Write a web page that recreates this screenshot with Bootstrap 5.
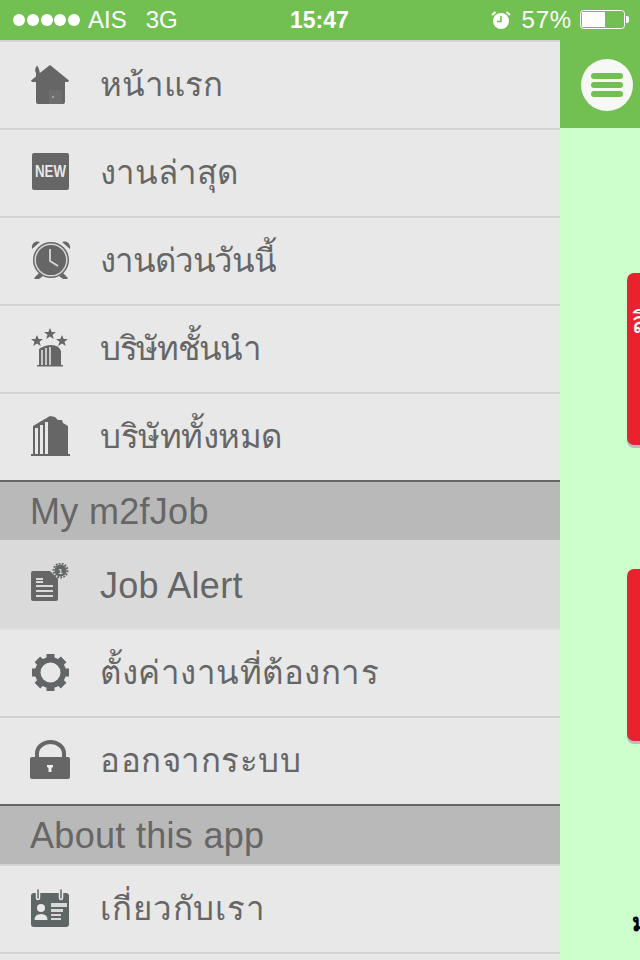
<!DOCTYPE html>
<html lang="th"><head><meta charset="utf-8"><title>m2fJob</title>
<link href="https://cdn.jsdelivr.net/npm/bootstrap@5.3.0/dist/css/bootstrap.min.css" rel="stylesheet">
<style>
html,body{width:640px;height:960px;overflow:hidden;margin:0}
body{font-family:"Liberation Sans","Noto Sans","DejaVu Sans",sans-serif;background:#ccffcc}
.sbar{height:40px;background:#72bf52;color:#fff;font-size:24px;line-height:40px;padding:0 0 0 13px;position:relative}
.sdots{display:flex;gap:1.75px;margin-right:8px}
.sdots i{width:12px;height:12px;border-radius:50%;background:#fff;display:block}
.scarrier{margin-left:19px}
.stime{position:absolute;left:290px;top:0;font-weight:700;font-size:23px}
.sright{position:absolute;right:0;top:0;height:40px}
.sclock{margin-right:11px}
.spct{margin-right:8px;letter-spacing:.8px}
.sbatt{margin-right:11px}
.shell{height:920px}
.side{width:560px;flex:none;background:#e8e8e8}
.mrow{height:88px;border-bottom:2px solid #d3d3d3;color:#666;font-size:33px;padding-left:30px;overflow:hidden}
.mrow.first{border-top:2px solid #d3d3d3;height:90px}
.mrow.sel{background:#dadada;height:90px;border-bottom-color:#e0e0e0;font-size:36px;letter-spacing:.3px}
.mrow.sel span{padding-top:3px}
.mrow.nosep{border-bottom:0;height:86px}
.mrow svg{width:42px;height:42px;flex:none;margin-right:28px}
.sp-a{letter-spacing:-1.1px}
.sp-b{letter-spacing:-1.3px}
.sp-c{letter-spacing:-.45px}
.sp-d{letter-spacing:.5px}
.sp-e{letter-spacing:.9px}
.mhead{height:60px;background:#b9b9b9;border-top:2px solid #666;color:#666;font-size:36px;letter-spacing:.3px;padding-left:30px;line-height:60px}
.mhead.abt{height:62px;border-bottom:2px solid #d3d3d3}
.rcol{flex:1;overflow:hidden;min-width:0}
.rtop{height:88px;background:#72bf52;padding:19px 0 0 21px}
.burger{width:52px;height:52px;border-radius:50%;background:#f6f8f6;padding:14px 10px 0;display:flex;flex-direction:column;gap:3px}
.burger i{display:block;height:6px;border-radius:3px;background:#72bf52}
.rbody{padding:145px 0 0 67px;height:832px;overflow:hidden}
.rcard{width:300px;height:172px;background:#e8232f;border-radius:7px;box-shadow:0 3px 0 #bdbdbd;color:#fff;font-size:30px;padding:32px 0 0 4px;line-height:36px;margin-bottom:124px;white-space:nowrap}
.rfoot{color:#000;font-size:24px;font-weight:700;white-space:nowrap;line-height:30px;margin-left:5px;margin-top:167px}
.rcard + .rcard{margin-bottom:0}
</style></head><body>
<div class="sbar d-flex align-items-center">
 <div class="sdots"><i></i><i></i><i></i><i></i><i></i></div><span>AIS</span><span class="scarrier">3G</span>
 <span class="stime">15:47</span>
 <div class="sright d-flex align-items-center">
  <svg class="sclock" width="20" height="20" viewBox="0 0 20 20"><circle cx="10" cy="11" r="8" fill="#fff"/><path d="M10 6v5.500H6" stroke="#72bf52" stroke-width="1.600" fill="none"/><path d="M1 5 4.500 2M19 5 15.500 2" stroke="#fff" stroke-width="2"/></svg>
  <span class="spct">57%</span>
  <svg class="sbatt" width="49" height="20" viewBox="0 0 49 20"><rect x=".5" y=".5" width="44" height="18" rx="3" fill="none" stroke="#fff"/><rect x="2" y="2" width="23" height="15" fill="#fff"/><path d="M46 6h1q2 0 2 2v3q0 2-2 2h-1z" fill="#fff"/></svg>
 </div>
</div>
<div class="shell d-flex">
<div class="side">
 <div class="mrow first d-flex align-items-center"><svg viewBox="0 0 42 42"><path d="M20 1 39 16.500l-1 1.500h-3v20a2 2 0 0 1-2 2H8a2 2 0 0 1-2-2V18H2l-1-1.500 5-4V9C4.500 7 5 4 7 1.500c1.500 2 2.500 4 2.800 7.500z" fill="#666"/><path d="M19 26h13v14H19z" fill="#6e6e6e"/><circle cx="23" cy="33" r=".8" fill="#ddd"/></svg><span>หน้าแรก</span></div>
 <div class="mrow d-flex align-items-center"><svg viewBox="0 0 42 42"><rect x="2" y="1" width="37" height="37" rx="2" fill="#666"/><text x="20.500" y="25" text-anchor="middle" textLength="31" lengthAdjust="spacingAndGlyphs" font-family="Liberation Sans" font-weight="700" font-size="16" fill="#e8e8e8">NEW</text></svg><span>งานล่าสุด</span></div>
 <div class="mrow d-flex align-items-center"><svg viewBox="0 0 42 42"><path d="M2 9C1 3 6 0 10 2zM40 9c1-6-4-9-8-7zM9 33l-5 5 1 1h4l4-3zM33 33l5 5-1 1h-4l-4-3z" fill="#666"/><circle cx="21" cy="20" r="18" fill="#666"/><circle cx="21" cy="20" r="15.800" fill="none" stroke="#d8d8d8" stroke-width="1.500"/><path d="M20 9v12l8 5" fill="none" stroke="#d8d8d8" stroke-width="1.800"/></svg><span class="sp-a">งานด่วนวันนี้</span></div>
 <div class="mrow d-flex align-items-center"><svg viewBox="0 0 42 42"><path d="M20 0l1.700 4h4.300l-3.500 2.800 1.300 4.300L20 8.500l-3.800 2.600 1.300-4.300L14 4h4.300zM7 7l1.700 4H13l-3.500 2.800 1.300 4.300L7 15.500l-3.800 2.600 1.300-4.300L1 11h4.300zM32 7l1.700 4H38l-3.500 2.800 1.300 4.300L32 15.500l-3.800 2.600 1.300-4.300L26 11h4.300z" fill="#666"/><path d="M9 38V21q6-4 12-4 8 0 10 6v15z" fill="#666"/><path d="M12 22v16M16 20v18M20 19v19" stroke="#e8e8e8" stroke-width="1.500"/><rect x="7" y="37" width="26" height="1.500" fill="#666"/></svg><span class="sp-b">บริษัทชั้นนำ</span></div>
 <div class="mrow nosep d-flex align-items-center"><svg viewBox="0 0 42 42"><path d="M3 39V10L20 0l5 1 3 3h4l1 3 5 3v29z" fill="#666"/><path d="M6.500 39V12M11.500 39V9M16.500 39V6" stroke="#e8e8e8" stroke-width="3"/><rect x="1" y="38" width="39" height="2" fill="#666"/></svg><span class="sp-c">บริษัททั้งหมด</span></div>
 <div class="mhead">My m2fJob</div>
 <div class="mrow sel d-flex align-items-center"><svg viewBox="0 0 42 42"><path d="M1 10a2 2 0 0 1 2-2h17l8 8v20a2 2 0 0 1-2 2H3a2 2 0 0 1-2-2z" fill="#666"/><path d="M6 16h7M6 19h7M6 23h17M6 28h17M6 33h17" stroke="#dadada" stroke-width="1.800"/><circle cx="30.500" cy="7.500" r="6" fill="#666"/><circle cx="30.500" cy="7.500" r="7" fill="none" stroke="#666" stroke-width="2" stroke-dasharray="1.800 1.300"/><text x="30.500" y="10.500" text-anchor="middle" font-family="Liberation Sans" font-weight="700" font-size="8" letter-spacing="0" fill="#dadada">1</text></svg><span>Job Alert</span></div>
 <div class="mrow d-flex align-items-center"><svg viewBox="0 0 42 42"><path d="M20.500 2v37M2 20.500h37M7.400 7.400l26.200 26.200M33.600 7.400 7.400 33.600" stroke="#626666" stroke-width="8"/><circle cx="20.500" cy="20.500" r="15.500" fill="#626666"/><circle cx="20.500" cy="20.500" r="10" fill="#e8e8e8"/></svg><span class="sp-d">ตั้งค่างานที่ต้องการ</span></div>
 <div class="mrow nosep d-flex align-items-center"><svg viewBox="0 0 42 42"><path d="M7 18v-4.500a13.500 11.500 0 0 1 27 0V18" fill="none" stroke="#666" stroke-width="4"/><rect y="17" width="40" height="22" rx="2" fill="#666"/><path d="M17 25h6v2l-1.500 1v4h-3v-4l-1.500-1z" fill="#eee"/></svg><span class="sp-d">ออกจากระบบ</span></div>
 <div class="mhead abt">About this app</div>
 <div class="mrow d-flex align-items-center"><svg viewBox="0 0 42 42"><rect x="1" y="5" width="38" height="34" rx="3" fill="#5f6666"/><path d="M8 2v8M31 2v8" stroke="#e8e8e8" stroke-width="4.500" stroke-linecap="round"/><path d="M8 2v8M31 2v8" stroke="#666" stroke-width="1.500" stroke-linecap="round"/><circle cx="11" cy="20" r="4" fill="#e8e8e8"/><path d="M4.500 32q0-6 6.500-6t6.500 6z" fill="#e8e8e8"/><path d="M21 15h16v4H21zM21 21h12v3H21zM21 26h10v2H21zM21 30h10v2H21z" fill="#d8d8d8"/></svg><span class="sp-e">เกี่ยวกับเรา</span></div>
</div>
<div class="rcol">
 <div class="rtop"><div class="burger"><i></i><i></i><i></i></div></div>
 <div class="rbody">
  <div class="rcard">ลิงก์งาน</div>
  <div class="rcard"></div>
  <div class="rfoot">ม</div>
 </div>
</div>
</div>
</body></html>
